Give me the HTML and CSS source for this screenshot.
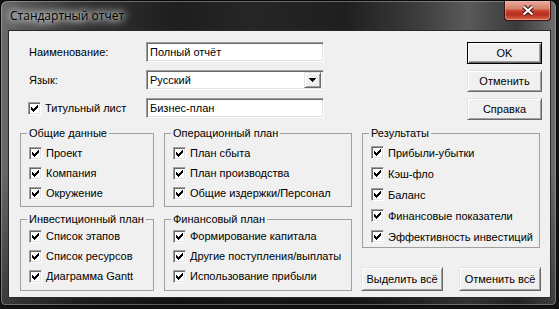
FILE: index.html
```html
<!DOCTYPE html>
<html lang="ru">
<head>
<meta charset="utf-8">
<title>Стандартный отчет</title>
<link rel="stylesheet" href="styles.css">
</head>
<body>
<div class="window">
  <div class="titlebar">
    <span class="title">Стандартный отчет</span>
    <span class="close">
      <svg width="14" height="11" viewBox="0 0 14 11">
        <path d="M2.5 1.5 L11.5 9.5 M11.5 1.5 L2.5 9.5" stroke="#3a1510" stroke-width="4.2" fill="none"/>
        <path d="M2.5 1.5 L11.5 9.5 M11.5 1.5 L2.5 9.5" stroke="#ffffff" stroke-width="2.2" fill="none"/>
      </svg>
    </span>
  </div>
  <div class="client">
    <div class="top">
      <div class="form">
        <span class="lbl">Наименование:</span>
        <div class="field">Полный отчёт</div>
        <span class="lbl">Язык:</span>
        <div class="field combo">
          <span class="combo-text">Русский</span>
          <span class="drop"><svg width="7" height="4" viewBox="0 0 7 4" shape-rendering="crispEdges"><path d="M0 0H7V1H6V2H5V3H4V4H3V3H2V2H1V1H0Z" fill="#000"/></svg></span>
        </div>
        <span class="chk title-chk"><span class="box"><svg width="7" height="7" viewBox="0 0 7 7" shape-rendering="crispEdges"><path d="M0 2H1V3H2V4H3V3H4V2H5V1H6V0H7V3H6V4H5V5H4V6H3V7H2V6H1V5H0Z" fill="#000"/></svg></span>Титульный лист</span>
        <div class="field">Бизнес-план</div>
      </div>
      <div class="actions">
        <div class="btn default">OK</div>
        <div class="btn">Отменить</div>
        <div class="btn">Справка</div>
      </div>
    </div>
    <div class="groups">
      <div class="col">
        <fieldset class="group upper">
          <legend>Общие данные</legend>
          <div class="chk"><span class="box"><svg width="7" height="7" viewBox="0 0 7 7" shape-rendering="crispEdges"><path d="M0 2H1V3H2V4H3V3H4V2H5V1H6V0H7V3H6V4H5V5H4V6H3V7H2V6H1V5H0Z" fill="#000"/></svg></span>Проект</div>
          <div class="chk"><span class="box"><svg width="7" height="7" viewBox="0 0 7 7" shape-rendering="crispEdges"><path d="M0 2H1V3H2V4H3V3H4V2H5V1H6V0H7V3H6V4H5V5H4V6H3V7H2V6H1V5H0Z" fill="#000"/></svg></span>Компания</div>
          <div class="chk"><span class="box"><svg width="7" height="7" viewBox="0 0 7 7" shape-rendering="crispEdges"><path d="M0 2H1V3H2V4H3V3H4V2H5V1H6V0H7V3H6V4H5V5H4V6H3V7H2V6H1V5H0Z" fill="#000"/></svg></span>Окружение</div>
        </fieldset>
        <fieldset class="group lower">
          <legend>Инвестиционный план</legend>
          <div class="chk"><span class="box"><svg width="7" height="7" viewBox="0 0 7 7" shape-rendering="crispEdges"><path d="M0 2H1V3H2V4H3V3H4V2H5V1H6V0H7V3H6V4H5V5H4V6H3V7H2V6H1V5H0Z" fill="#000"/></svg></span>Список этапов</div>
          <div class="chk"><span class="box"><svg width="7" height="7" viewBox="0 0 7 7" shape-rendering="crispEdges"><path d="M0 2H1V3H2V4H3V3H4V2H5V1H6V0H7V3H6V4H5V5H4V6H3V7H2V6H1V5H0Z" fill="#000"/></svg></span>Список ресурсов</div>
          <div class="chk"><span class="box"><svg width="7" height="7" viewBox="0 0 7 7" shape-rendering="crispEdges"><path d="M0 2H1V3H2V4H3V3H4V2H5V1H6V0H7V3H6V4H5V5H4V6H3V7H2V6H1V5H0Z" fill="#000"/></svg></span>Диаграмма Gantt</div>
        </fieldset>
      </div>
      <div class="col">
        <fieldset class="group upper">
          <legend>Операционный план</legend>
          <div class="chk"><span class="box"><svg width="7" height="7" viewBox="0 0 7 7" shape-rendering="crispEdges"><path d="M0 2H1V3H2V4H3V3H4V2H5V1H6V0H7V3H6V4H5V5H4V6H3V7H2V6H1V5H0Z" fill="#000"/></svg></span>План сбыта</div>
          <div class="chk"><span class="box"><svg width="7" height="7" viewBox="0 0 7 7" shape-rendering="crispEdges"><path d="M0 2H1V3H2V4H3V3H4V2H5V1H6V0H7V3H6V4H5V5H4V6H3V7H2V6H1V5H0Z" fill="#000"/></svg></span>План производства</div>
          <div class="chk"><span class="box"><svg width="7" height="7" viewBox="0 0 7 7" shape-rendering="crispEdges"><path d="M0 2H1V3H2V4H3V3H4V2H5V1H6V0H7V3H6V4H5V5H4V6H3V7H2V6H1V5H0Z" fill="#000"/></svg></span>Общие издержки/Персонал</div>
        </fieldset>
        <fieldset class="group lower">
          <legend>Финансовый план</legend>
          <div class="chk"><span class="box"><svg width="7" height="7" viewBox="0 0 7 7" shape-rendering="crispEdges"><path d="M0 2H1V3H2V4H3V3H4V2H5V1H6V0H7V3H6V4H5V5H4V6H3V7H2V6H1V5H0Z" fill="#000"/></svg></span>Формирование капитала</div>
          <div class="chk"><span class="box"><svg width="7" height="7" viewBox="0 0 7 7" shape-rendering="crispEdges"><path d="M0 2H1V3H2V4H3V3H4V2H5V1H6V0H7V3H6V4H5V5H4V6H3V7H2V6H1V5H0Z" fill="#000"/></svg></span>Другие поступления/выплаты</div>
          <div class="chk"><span class="box"><svg width="7" height="7" viewBox="0 0 7 7" shape-rendering="crispEdges"><path d="M0 2H1V3H2V4H3V3H4V2H5V1H6V0H7V3H6V4H5V5H4V6H3V7H2V6H1V5H0Z" fill="#000"/></svg></span>Использование прибыли</div>
        </fieldset>
      </div>
      <div class="col">
        <fieldset class="group results">
          <legend>Результаты</legend>
          <div class="chk"><span class="box"><svg width="7" height="7" viewBox="0 0 7 7" shape-rendering="crispEdges"><path d="M0 2H1V3H2V4H3V3H4V2H5V1H6V0H7V3H6V4H5V5H4V6H3V7H2V6H1V5H0Z" fill="#000"/></svg></span>Прибыли-убытки</div>
          <div class="chk"><span class="box"><svg width="7" height="7" viewBox="0 0 7 7" shape-rendering="crispEdges"><path d="M0 2H1V3H2V4H3V3H4V2H5V1H6V0H7V3H6V4H5V5H4V6H3V7H2V6H1V5H0Z" fill="#000"/></svg></span>Кэш-фло</div>
          <div class="chk"><span class="box"><svg width="7" height="7" viewBox="0 0 7 7" shape-rendering="crispEdges"><path d="M0 2H1V3H2V4H3V3H4V2H5V1H6V0H7V3H6V4H5V5H4V6H3V7H2V6H1V5H0Z" fill="#000"/></svg></span>Баланс</div>
          <div class="chk"><span class="box"><svg width="7" height="7" viewBox="0 0 7 7" shape-rendering="crispEdges"><path d="M0 2H1V3H2V4H3V3H4V2H5V1H6V0H7V3H6V4H5V5H4V6H3V7H2V6H1V5H0Z" fill="#000"/></svg></span>Финансовые показатели</div>
          <div class="chk"><span class="box"><svg width="7" height="7" viewBox="0 0 7 7" shape-rendering="crispEdges"><path d="M0 2H1V3H2V4H3V3H4V2H5V1H6V0H7V3H6V4H5V5H4V6H3V7H2V6H1V5H0Z" fill="#000"/></svg></span>Эффективность инвестиций</div>
        </fieldset>
        <div class="bottom-btns">
          <div class="btn wide">Выделить всё</div>
          <div class="btn wide">Отменить всё</div>
        </div>
      </div>
    </div>
  </div>
</div>
</body>
</html>
```

FILE: styles.css
```css
* { box-sizing: border-box; }
html, body { margin: 0; padding: 0; }
body {
  width: 559px;
  height: 309px;
  overflow: hidden;
  background: #121212;
  font-family: "Liberation Sans", Arial, sans-serif;
  font-size: 11px;
  color: #000;
}
.window {
  width: 557px;
  height: 306px;
  border: 1px solid #080808;
  border-radius: 7px 7px 5px 5px;
  padding: 0 6px 8px 8px;
  display: flex;
  flex-direction: column;
  background:
    linear-gradient(180deg, rgba(0,0,0,0) 0, rgba(0,0,0,0) 55%, rgba(0,0,0,0.45) 100%),
    linear-gradient(90deg, #6c6c6c 0, #555 4%, #333 14%, #1e1e1e 32%, #262626 45%, #1f1f1f 62%, #3c3c3c 75%, #5a5a5a 84%, #3a3a3a 93%, #707070 100%);
  box-shadow: inset 0 0 0 1px rgba(190,190,190,0.45);
}
.titlebar {
  height: 30px;
  display: flex;
  align-items: flex-start;
  flex: none;
}
.title {
  margin-left: 1px;
  padding-top: 7px;
  font-family: "Open Sans", "Noto Sans", sans-serif;
  font-size: 12px;
  line-height: 16px;
  color: #000;
  text-shadow: 0 0 6px #fff, 0 0 10px #fff, 0 0 14px rgba(255,255,255,0.9);
}
.close {
  margin-left: auto;
  margin-right: -1px;
  width: 47px;
  height: 20px;
  border: 1px solid #3b0f0a;
  border-top: none;
  border-radius: 0 0 4px 4px;
  background: linear-gradient(180deg, #e9aa9c 0, #d9826f 40%, #c7402b 52%, #b8301d 72%, #d66a4f 100%);
  box-shadow: inset 0 0 0 1px rgba(255,200,190,0.45);
  display: flex;
  align-items: center;
  justify-content: center;
}
.client {
  height: 266px;
  flex: none;
  background: #f0f0f0;
  padding: 11px 10px 6px 11px;
  display: flex;
  flex-direction: column;
  box-shadow: 0 0 0 1px #2a2a2a;
}
.top {
  height: 78px;
  display: flex;
  flex: none;
}
.form {
  margin-left: 9px;
  display: grid;
  grid-template-columns: 117px 178px;
  grid-auto-rows: 20px;
  row-gap: 8px;
  align-items: center;
}
.field {
  height: 20px;
  background: #fff;
  border: 1px solid;
  border-color: #a0a0a0 #fff #fff #a0a0a0;
  box-shadow: inset 1px 1px #696969, inset -1px -1px #e3e3e3;
  padding: 0 3px;
  line-height: 18px;
  white-space: nowrap;
}
.combo {
  display: flex;
  align-items: center;
  padding: 2px 2px 2px 3px;
}
.combo-text { flex: 1; line-height: 14px; }
.drop {
  width: 17px;
  height: 16px;
  border: 1px solid;
  border-color: #e3e3e3 #696969 #696969 #e3e3e3;
  box-shadow: inset 1px 1px #fff, inset -1px -1px #a0a0a0;
  background: #f0f0f0;
  display: flex;
  align-items: center;
  justify-content: center;
}
.actions {
  margin-left: auto;
  margin-right: -2px;
  width: 75px;
  display: flex;
  flex-direction: column;
  gap: 6px;
}
.btn {
  height: 22px;
  background: #f0f0f0;
  border: 1px solid;
  border-color: #e3e3e3 #696969 #696969 #e3e3e3;
  box-shadow: inset 1px 1px #fff, inset -1px -1px #a0a0a0;
  display: flex;
  align-items: center;
  justify-content: center;
  white-space: nowrap;
}
.btn.default {
  border-color: #000;
  box-shadow: inset 1px 1px #fff, inset -1px -1px #696969, inset -2px -2px #a0a0a0;
}
.groups {
  margin-top: 6px;
  flex: 1;
  display: grid;
  grid-template-columns: 134px 188px 178px;
  column-gap: 10px;
}
.col {
  display: flex;
  flex-direction: column;
}
.group {
  margin: 0;
  min-width: 0;
  border: 1px solid #a0a0a0;
  padding: 3px 4px 3px 6px;
}
.group legend {
  padding: 0 2px;
  line-height: 14px;
  height: 14px;
}
.group.upper .chk { height: 20px; }
.group.lower { margin-top: 5px; padding-top: 0; padding-bottom: 4px; }
.group.lower .chk { height: 20px; }
.group.results { padding-top: 2px; padding-bottom: 0; }
.group.results .chk { height: 21px; }
.chk {
  display: flex;
  align-items: center;
  gap: 4px;
  padding-left: 2px;
  white-space: nowrap;
}
.title-chk { margin-left: -1px; padding-left: 0; }
.box {
  width: 13px;
  height: 13px;
  flex: none;
  background: #fff;
  border: 1px solid;
  border-color: #a0a0a0 #fff #fff #a0a0a0;
  box-shadow: inset 1px 1px #696969, inset -1px -1px #e3e3e3;
  padding: 2px;
  display: flex;
}
.box svg { display: block; }
.bottom-btns {
  margin-top: auto;
  margin-left: -1px;
  margin-right: -1px;
  display: flex;
  justify-content: space-between;
}
.btn.wide { width: 82px; height: 24px; }
```
